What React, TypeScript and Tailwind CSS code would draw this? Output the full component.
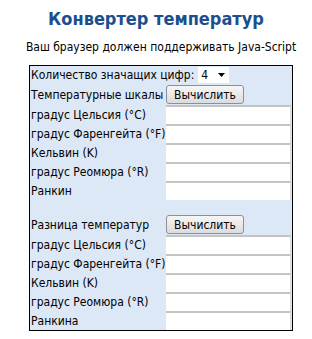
import React from "react";

const font = { fontFamily: '"DejaVu Sans Condensed", "DejaVu Sans", Tahoma, sans-serif' };

function Calc() {
  return (
    <button className="h-[19px] w-[78px] rounded-[3px] border border-[#8e8f8f] bg-gradient-to-b from-[#f6f6f6] to-[#dcdcdc] text-[12px] text-black leading-none">
      Вычислить
    </button>
  );
}

function Field() {
  return <div className="h-[19px] flex-1 bg-white border-t-2 border-[#c4c4c4] border-r border-r-[#d8d8d8]" />;
}

function Row({ label, children }: { label: string; children?: React.ReactNode }) {
  return (
    <div className="flex items-center h-[19px]">
      <div className="w-[136px] shrink-0 whitespace-nowrap pl-[1px] text-[12px] leading-none text-black">{label}</div>
      {children}
    </div>
  );
}

const scales = [
  "градус Цельсия (°C)",
  "градус Фаренгейта (°F)",
  "Кельвин (K)",
  "градус Реомюра (°R)",
];

export default function App() {
  return (
    <div className="w-[312px] h-[339px] bg-white" style={font}>
      <h1 className="pt-[6px] text-center text-[18px] font-bold text-[#1b4f8d] leading-[26px]">
        Конвертер температур
      </h1>
      <p className="mt-[8px] pl-[10px] text-center text-[12px] text-black leading-[14px]">
        Ваш браузер должен поддерживать Java-Script
      </p>
      <div className="ml-[29px] mt-[11px] w-[264px] border border-black bg-[#dce8f6] pr-[1px]">
        <div className="flex items-center h-[18px] pl-[1px]">
          <span className="text-[12px] leading-none text-black whitespace-nowrap">Количество значащих цифр:</span>
          <div className="ml-[4px] flex h-[16px] w-[31px] items-center justify-between bg-white pl-[3px] pr-[4px] text-[12px] leading-none">
            <span>4</span>
            <svg width="7" height="4" viewBox="0 0 7 4"><path d="M0 0h7L3.5 4z" fill="#000" /></svg>
          </div>
        </div>
        <div className="flex items-center h-[21px]">
          <div className="w-[136px] shrink-0 pl-[1px] text-[12px] leading-none">Температурные шкалы</div>
          <Calc />
        </div>
        {scales.map((s) => (
          <Row key={s} label={s}><Field /></Row>
        ))}
        <Row label="Ранкин"><Field /></Row>
        <div className="h-[14px]" />
        <div className="flex items-center h-[21px]">
          <div className="w-[136px] shrink-0 pl-[1px] text-[12px] leading-none">Разница температур</div>
          <Calc />
        </div>
        {scales.map((s) => (
          <Row key={"d" + s} label={s}><Field /></Row>
        ))}
        <Row label="Ранкина"><Field /></Row>
      </div>
    </div>
  );
}
